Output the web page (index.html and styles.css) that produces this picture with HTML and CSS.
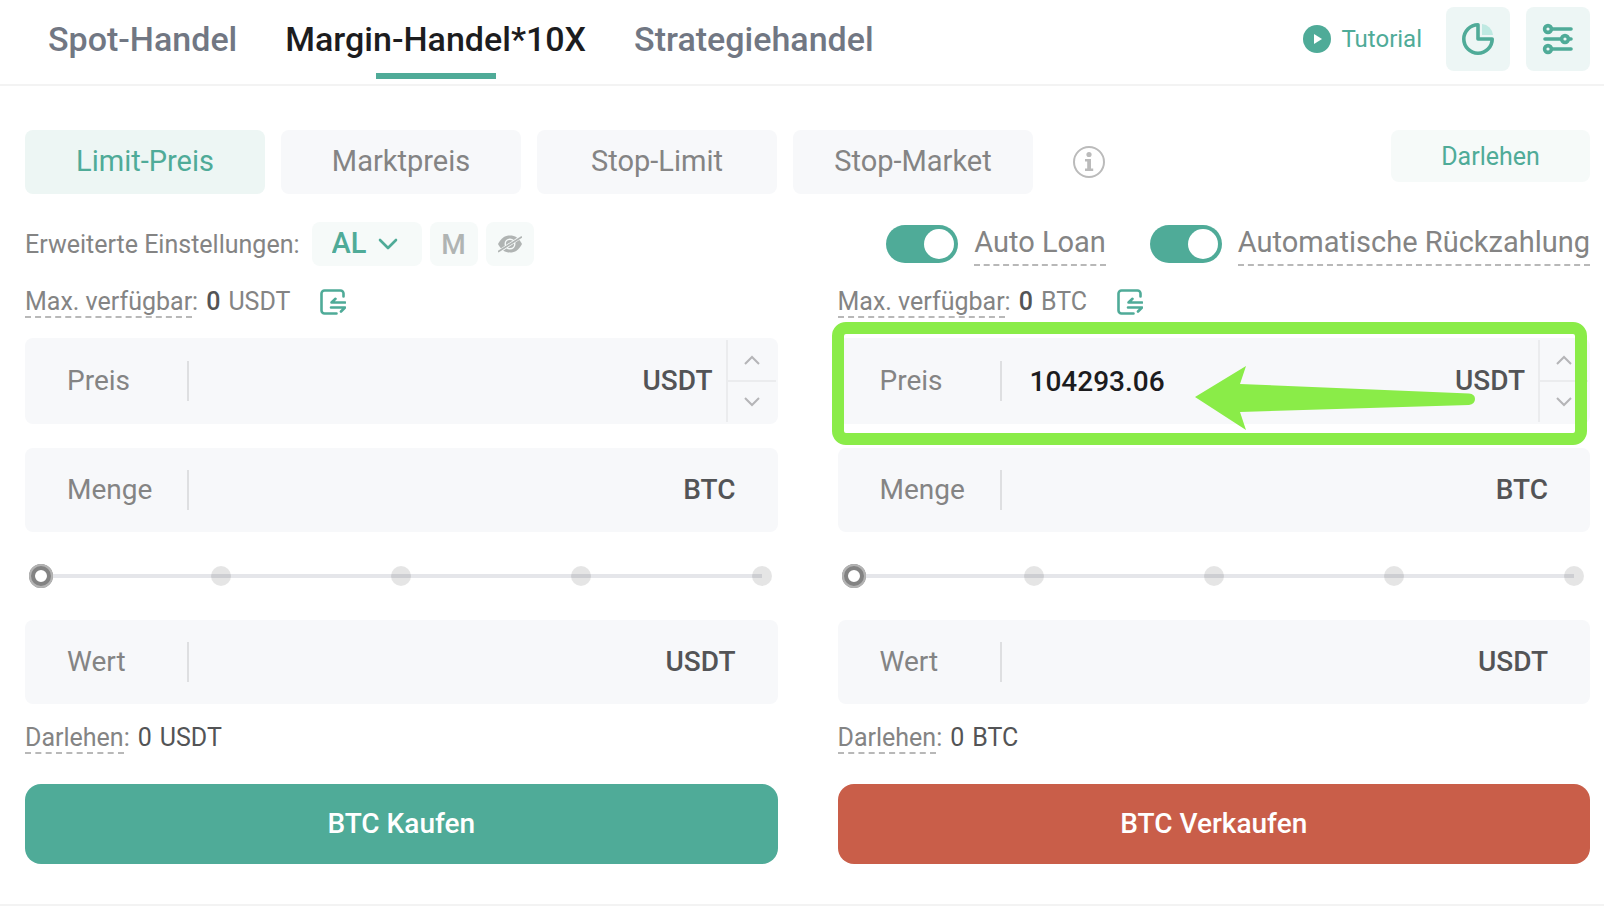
FILE: index.html
```html
<!DOCTYPE html>
<html lang="de">
<head>
  <meta charset="UTF-8">
  <meta name="viewport" content="width=device-width, initial-scale=1.0">
  <title>Margin-Handel</title>
  <link rel="stylesheet" href="styles.css">
</head>
<body>

<header class="header">
  <nav class="tabs">
    <a href="#" class="tab">Spot-Handel</a>
    <a href="#" class="tab active">Margin-Handel*10X</a>
    <a href="#" class="tab">Strategiehandel</a>
  </nav>
  <div class="header-tools">
    <a href="#" class="tutorial">
      <svg width="28" height="28" viewBox="0 0 28 28">
        <circle cx="14" cy="14" r="14" fill="#4fab98"/>
        <path d="M11 9l8 5-8 5z" fill="#fff"/>
      </svg>
      Tutorial
    </a>
    <button type="button" class="tool-btn" aria-label="Statistik">
      <svg width="32" height="32" viewBox="0 0 32 32">
        <path d="M20 1a12 12 0 0 1 11 11H20z" fill="#bfe9e2"/>
        <path d="M16 1.8a14.2 14.2 0 1 0 14.2 14.2H16z" fill="none" stroke="#4fab98" stroke-width="3.6" stroke-linejoin="round"/>
      </svg>
    </button>
    <button type="button" class="tool-btn" aria-label="Filter">
      <svg width="32" height="32" viewBox="0 0 32 32" fill="none" stroke="#4fab98" stroke-width="3.6" stroke-linecap="round">
        <circle cx="6" cy="6" r="3.4"/>
        <path d="M10 6h19"/>
        <circle cx="23" cy="16" r="3.4"/>
        <path d="M3 16h16M27 16h2"/>
        <circle cx="6" cy="26" r="3.4"/>
        <path d="M10 26h19"/>
      </svg>
    </button>
  </div>
</header>

<main class="main-container">
  <div class="type-row">
    <button type="button" class="type-btn active">Limit-Preis</button>
    <button type="button" class="type-btn">Marktpreis</button>
    <button type="button" class="type-btn">Stop-Limit</button>
    <button type="button" class="type-btn">Stop-Market</button>
    <svg class="info" width="32" height="32" viewBox="0 0 32 32">
      <circle cx="16" cy="16" r="15" fill="none" stroke="#bbb" stroke-width="2"/>
      <circle cx="16" cy="8.5" r="2.6" fill="#bbb"/>
      <path d="M12 13h6v9.5h2.2v2.4h-8.2v-2.4h2.2v-7.1h-2.2z" fill="#bbb"/>
    </svg>
    <button type="button" class="loan-btn">Darlehen</button>
  </div>

  <div class="settings-row">
    <label for="mode" class="settings-label">Erweiterte Einstellungen:</label>
    <div class="mode-box">
      <select id="mode">
        <option>AL</option>
        <option>AB</option>
      </select>
      <svg class="chevron" width="20" height="12" viewBox="0 0 20 12">
        <path d="M2 2l8 8 8-8" fill="none" stroke="#4fab98" stroke-width="2.6" stroke-linecap="round" stroke-linejoin="round"/>
      </svg>
    </div>
    <button type="button" class="small-btn">M</button>
    <button type="button" class="small-btn" aria-label="Ausblenden">
      <svg width="24" height="18" viewBox="0 0 24 18">
        <path d="M0 9c3-6 7-8.5 12-8.5S21 3 24 9c-3 6-7 8.5-12 8.5S3 15 0 9z" fill="#b0b4b3"/>
        <circle cx="12" cy="9" r="4.8" fill="none" stroke="#f6faf9" stroke-width="1.4"/>
        <path d="M1 16.5L23 2" stroke="#f6faf9" stroke-width="3.2"/>
        <path d="M0 16.8L24 1.8" stroke="#b0b4b3" stroke-width="1.8"/>
      </svg>
    </button>
    <div class="switches">
      <div class="switch-item">
        <input type="checkbox" id="autoLoan" class="switch" checked>
        <label for="autoLoan">Auto Loan</label>
      </div>
      <div class="switch-item">
        <input type="checkbox" id="autoRepay" class="switch" checked>
        <label for="autoRepay">Automatische Rückzahlung</label>
      </div>
    </div>
  </div>

  <div class="panels">
    <form class="panel">
      <div class="info-row available">
        <span class="dashed">Max. verfügbar</span>:<strong>0</strong><span>USDT</span>
        <button type="button" class="transfer" aria-label="Transfer">
          <svg width="26" height="26" viewBox="0 0 26 26" fill="none" stroke="#4fab98" stroke-width="2.6" stroke-linecap="round" stroke-linejoin="round">
            <path d="M23.5 7.5V4.5a3 3 0 0 0-3-3h-16a3 3 0 0 0-3 3v17a3 3 0 0 0 3 3h12"/>
            <path d="M25 13.5H11.5l4-3.7M11 18.5h14l-4 4"/>
          </svg>
        </button>
      </div>

      <div class="field price-field">
        <label for="buyPrice">Preis</label>
        <input type="text" id="buyPrice">
        <span class="unit">USDT</span>
        <div class="stepper">
          <button type="button" aria-label="Erhöhen"><svg width="16" height="10" viewBox="0 0 16 10"><path d="M1 9l7-7 7 7"/></svg></button>
          <button type="button" aria-label="Verringern"><svg width="16" height="10" viewBox="0 0 16 10"><path d="M1 1l7 7 7-7"/></svg></button>
        </div>
      </div>

      <div class="field">
        <label for="buyAmount">Menge</label>
        <input type="text" id="buyAmount">
        <span class="unit">BTC</span>
      </div>

      <div class="slider">
        <div class="track"></div>
        <div class="dots"><i></i><i></i><i></i><i></i><i></i></div>
        <input type="range" min="0" max="100" value="0" aria-label="Anteil">
      </div>

      <div class="field">
        <label for="buyTotal">Wert</label>
        <input type="text" id="buyTotal">
        <span class="unit">USDT</span>
      </div>

      <div class="info-row loan">
        <span class="dashed">Darlehen</span>:<span class="dark">0</span><span class="dark">USDT</span>
      </div>

      <button type="button" class="submit-btn buy">BTC Kaufen</button>
    </form>

    <form class="panel">
      <div class="info-row available">
        <span class="dashed">Max. verfügbar</span>:<strong>0</strong><span>BTC</span>
        <button type="button" class="transfer" aria-label="Transfer">
          <svg width="26" height="26" viewBox="0 0 26 26" fill="none" stroke="#4fab98" stroke-width="2.6" stroke-linecap="round" stroke-linejoin="round">
            <path d="M23.5 7.5V4.5a3 3 0 0 0-3-3h-16a3 3 0 0 0-3 3v17a3 3 0 0 0 3 3h12"/>
            <path d="M25 13.5H11.5l4-3.7M11 18.5h14l-4 4"/>
          </svg>
        </button>
      </div>

      <div class="field price-field">
        <label for="sellPrice">Preis</label>
        <input type="text" id="sellPrice" value="104293.06">
        <span class="unit">USDT</span>
        <div class="stepper">
          <button type="button" aria-label="Erhöhen"><svg width="16" height="10" viewBox="0 0 16 10"><path d="M1 9l7-7 7 7"/></svg></button>
          <button type="button" aria-label="Verringern"><svg width="16" height="10" viewBox="0 0 16 10"><path d="M1 1l7 7 7-7"/></svg></button>
        </div>
        <!-- highlight around the price field -->
        <div class="highlight">
          <svg width="280" height="64" viewBox="0 0 280 64">
            <path d="M0 31L51 0 45 18 274 27.5Q280 28 280 33T274 39L45 46 51 64z" fill="#8aec48"/>
          </svg>
        </div>
      </div>

      <div class="field">
        <label for="sellAmount">Menge</label>
        <input type="text" id="sellAmount">
        <span class="unit">BTC</span>
      </div>

      <div class="slider">
        <div class="track"></div>
        <div class="dots"><i></i><i></i><i></i><i></i><i></i></div>
        <input type="range" min="0" max="100" value="0" aria-label="Anteil">
      </div>

      <div class="field">
        <label for="sellTotal">Wert</label>
        <input type="text" id="sellTotal">
        <span class="unit">USDT</span>
      </div>

      <div class="info-row loan">
        <span class="dashed">Darlehen</span>:<span class="dark">0</span><span class="dark">BTC</span>
      </div>

      <button type="button" class="submit-btn sell">BTC Verkaufen</button>
    </form>
  </div>
</main>

</body>
</html>
```

FILE: styles.css
```css
* {
  box-sizing: border-box;
}

body {
  margin: 0;
  font-family: Roboto, "Liberation Sans", sans-serif;
  font-size: 28px;
  color: #848484;
  background-color: #fff;
}

a {
  text-decoration: none;
}

button {
  font-family: inherit;
  border: none;
  padding: 0;
  cursor: pointer;
}

/* header */
.header {
  display: flex;
  justify-content: space-between;
  padding: 0 14px 0 48px;
  border-bottom: 2px solid #f3f3f3;
}

.tabs {
  display: flex;
  gap: 48px;
}

.tab {
  position: relative;
  font-size: 34px;
  font-weight: 500;
  line-height: 40px;
  padding: 19px 0 25px;
  color: #717783;
}

.tab.active {
  color: #1c1c1e;
}

.tab.active::after {
  content: "";
  position: absolute;
  left: 50%;
  bottom: 5px;
  width: 120px;
  height: 6px;
  margin-left: -60px;
  background-color: #4fab98;
}

.header-tools {
  display: flex;
  align-items: center;
  gap: 16px;
  padding-bottom: 6px;
}

.tutorial {
  display: flex;
  align-items: center;
  gap: 10px;
  margin-right: 8px;
  font-size: 24px;
  color: #4fab98;
}

.tool-btn {
  display: flex;
  justify-content: center;
  align-items: center;
  width: 64px;
  height: 64px;
  border-radius: 8px;
  background-color: #edf6f5;
}

/* order type */
.main-container {
  padding: 44px 14px 40px 25px;
  border-bottom: 2px solid #f3f3f3;
}

.type-row {
  display: flex;
  align-items: center;
  gap: 16px;
}

.type-btn {
  width: 240px;
  height: 64px;
  padding-bottom: 2px;
  border-radius: 8px;
  font-size: 29px;
  color: #848484;
  background-color: #f7f8fa;
}

.type-btn.active {
  color: #4fab98;
  background-color: #edf6f4;
}

.info {
  margin-left: 24px;
}

.loan-btn {
  align-self: flex-start;
  width: 199px;
  height: 52px;
  margin-left: auto;
  border-radius: 8px;
  font-size: 25px;
  color: #4fab98;
  background-color: #f6faf9;
}

/* settings */
.settings-row {
  display: flex;
  align-items: center;
  gap: 8px;
  height: 44px;
  margin-top: 28px;
}

.settings-label {
  margin-right: 4px;
  font-size: 25px;
}

.mode-box {
  position: relative;
}

.mode-box select {
  display: block;
  appearance: none;
  width: 110px;
  height: 44px;
  padding: 0 20px 2px;
  border: none;
  border-radius: 8px;
  font-family: inherit;
  font-size: 29px;
  font-weight: 500;
  color: #4fab98;
  background-color: #f6faf9;
}

.chevron {
  position: absolute;
  top: 16px;
  right: 24px;
  pointer-events: none;
}

.small-btn {
  display: flex;
  justify-content: center;
  align-items: center;
  width: 48px;
  height: 44px;
  border-radius: 8px;
  font-size: 28px;
  font-weight: 500;
  color: #b0b4b3;
  background-color: #f6faf9;
}

.switches {
  display: flex;
  gap: 44px;
  margin-left: auto;
}

.switch-item {
  display: flex;
  align-items: center;
  gap: 16px;
}

.switch-item label {
  font-size: 29px;
  line-height: 40px;
  padding-bottom: 2px;
  border-bottom: 2px dashed #b8b8b8;
}

.switch {
  appearance: none;
  width: 72px;
  height: 38px;
  margin: 0;
  padding: 4px;
  border-radius: 19px;
  background-color: #4fab98;
  cursor: pointer;
}

.switch::before {
  content: "";
  display: block;
  width: 30px;
  height: 30px;
  border-radius: 50%;
  background-color: #fff;
}

.switch:checked::before {
  margin-left: auto;
}

/* buy and sell panels */
.panels {
  display: grid;
  grid-template-columns: 1fr 1fr;
  gap: 60px;
}

.info-row {
  display: flex;
  align-items: flex-start;
  font-size: 25px;
  line-height: 28px;
}

.available {
  padding: 22px 0 20px;
}

.loan {
  padding: 20px 0 30px;
}

.dashed {
  border-bottom: 2px dashed #b8b8b8;
}

.info-row strong,
.info-row .dark {
  margin-left: 8px;
  color: #535456;
}

.info-row strong {
  margin-right: 8px;
  font-weight: 500;
}

.transfer {
  margin-top: 1px;
  margin-left: 30px;
  height: 26px;
  background-color: transparent;
}

.field {
  display: flex;
  align-items: center;
  height: 84px;
  padding: 0 42px;
  border-radius: 8px;
  background-color: #f7f8fa;
}

.price-field {
  position: relative;
  height: 86px;
  margin-bottom: 24px;
  padding-right: 2px;
}

.field label {
  width: 120px;
  padding-bottom: 2px;
}

.field input {
  flex: 1;
  min-width: 0;
  height: 40px;
  padding: 0 28px;
  border: none;
  border-left: 2px solid #dedfe1;
  outline: none;
  font-family: inherit;
  font-size: 28px;
  font-weight: 500;
  color: #1c1c1e;
  background-color: transparent;
}

.unit {
  padding-bottom: 2px;
  font-weight: 500;
  color: #535456;
}

.stepper {
  width: 50px;
  margin-left: 13px;
  border-left: 2px solid #ebecee;
}

.stepper button {
  display: flex;
  justify-content: center;
  align-items: center;
  width: 100%;
  height: 40px;
  background-color: transparent;
}

.stepper button + button {
  height: 42px;
  border-top: 2px solid #ebecee;
}

.stepper path {
  fill: none;
  stroke: #b5b5b7;
  stroke-width: 2;
}

.highlight {
  position: absolute;
  top: -16px;
  right: 3px;
  bottom: -21px;
  left: -6px;
  border: 12px solid #8aec48;
  border-radius: 14px;
  pointer-events: none;
}

.highlight svg {
  position: absolute;
  top: 32px;
  right: 100px;
}

/* slider */
.slider {
  display: grid;
  align-items: center;
  height: 88px;
}

.slider > * {
  grid-area: 1 / 1;
}

.track {
  height: 4px;
  margin: 0 16px;
  background-color: #e5e6ea;
}

.dots {
  display: flex;
  justify-content: space-between;
  padding: 0 6px;
}

.dots i {
  width: 20px;
  height: 20px;
  border-radius: 50%;
  background-color: rgba(0, 0, 0, 0.1);
}

.slider input {
  appearance: none;
  height: 24px;
  margin: 0 4px;
  background: transparent;
}

.slider input::-webkit-slider-thumb {
  appearance: none;
  width: 24px;
  height: 24px;
  border: 6px solid #838383;
  border-radius: 50%;
  background-color: #fff;
  outline: 2px solid #b3b3b3;
  outline-offset: -2px;
}

.submit-btn {
  display: block;
  width: 100%;
  height: 80px;
  padding-bottom: 2px;
  border-radius: 16px;
  font-size: 28px;
  font-weight: 500;
  color: #fff;
}

.buy {
  background-color: #4fab98;
}

.sell {
  background-color: #c95e49;
}
```
